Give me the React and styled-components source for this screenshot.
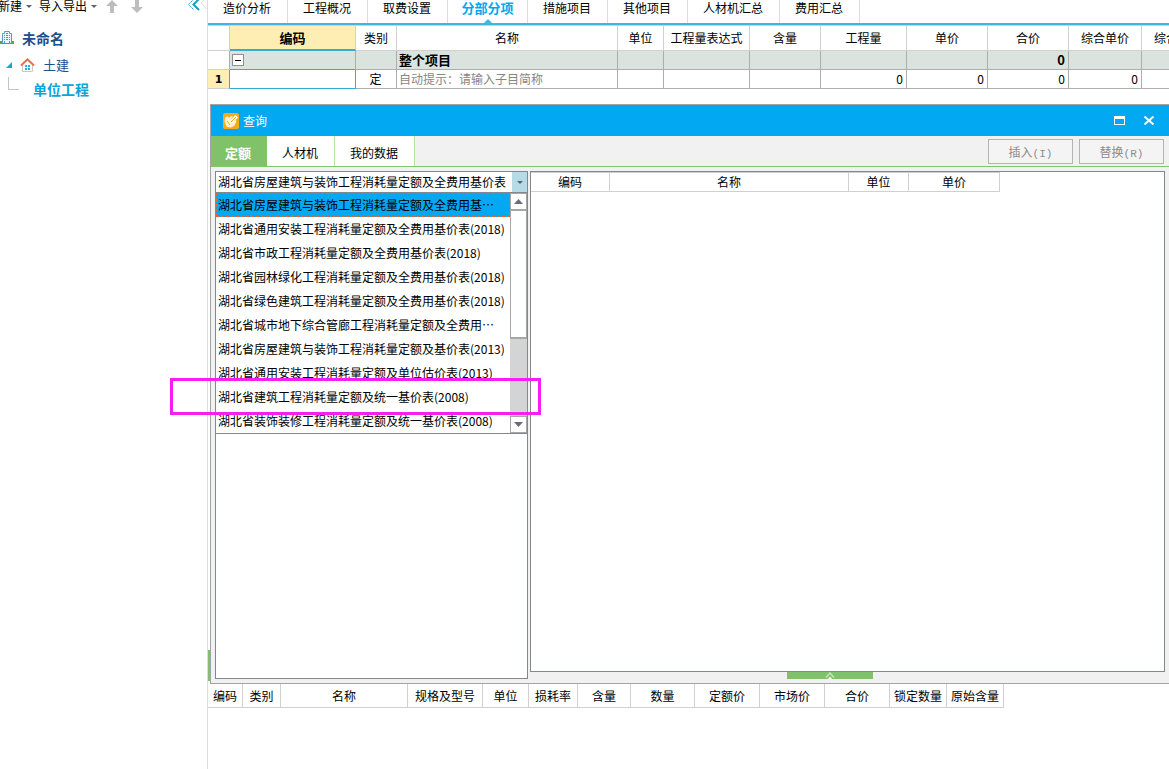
import { useState } from "react";
import styled, { createGlobalStyle } from "styled-components";

const GlobalStyle = createGlobalStyle`
  * {
    box-sizing: border-box;
  }
  body {
    margin: 0;
    background: #fff;
    color: #000;
    font-family: "Noto Sans CJK SC", sans-serif;
    font-size: 12px;
    line-height: 16px;
    overflow: hidden;
  }
  button, input, select {
    font: inherit;
    color: inherit;
    margin: 0;
    padding: 0;
    border: 0;
    border-radius: 0;
    background: none;
  }
`;

const Page = styled.div`
  display: flex;
  min-height: 100vh;
`;

/* sidebar */

const Sidebar = styled.aside`
  flex: 0 0 208px;
  border-right: 1px solid #dcdcdc;
`;

const Toolbar = styled.div`
  display: flex;
  align-items: center;
  height: 12px;
  margin-bottom: 12px;
  margin-left: -2px;
`;

const ToolButton = styled.button`
  display: flex;
  align-items: center;
  gap: 4px;
  margin-right: ${({ $gap }) => $gap || 8}px;
  white-space: nowrap;
`;

const CollapseButton = styled.button`
  display: flex;
  margin-left: auto;
`;

const TreeRow = styled.div`
  display: flex;
  align-items: center;
  gap: ${({ $gap }) => $gap || 8}px;
  height: ${({ $height }) => $height}px;
  padding-left: ${({ $indent }) => $indent || 0}px;
`;

const TreeLink = styled.a`
  color: ${({ $active }) => ($active ? "#0ba4dc" : "#1f4e8c")};
  font-size: ${({ $bold }) => ($bold ? 14 : 13)}px;
  font-weight: ${({ $bold }) => ($bold ? 700 : 400)};
  text-decoration: none;
`;

const Elbow = styled.span`
  width: 11px;
  height: 13px;
  margin-bottom: 12px;
  border-left: 1px solid #c4c4c4;
  border-bottom: 1px solid #c4c4c4;
`;

/* main area */

const Main = styled.main`
  display: flex;
  flex: 1;
  flex-direction: column;
  min-width: 0;
`;

const Tabs = styled.nav`
  display: flex;
  height: 25px;
  border-bottom: 2px solid #43b4e4;
`;

const Tab = styled.button`
  position: relative;
  min-width: 80px;
  padding: ${({ $active }) => ($active ? "0 8px 7px" : "0 16px 7px 15px")};
  border-right: 1px solid #dcdcdc;
  color: ${({ $active }) => ($active ? "#00a8f0" : "#000")};
  font-size: ${({ $active }) => ($active ? 13 : 12)}px;
  font-weight: ${({ $active }) => ($active ? 700 : 400)};
  white-space: nowrap;
`;

const TabPointer = styled.span`
  position: absolute;
  bottom: 0;
  left: 50%;
  margin-left: -4px;
  border: 4px solid transparent;
  border-top: 0;
  border-bottom-color: #43b4e4;
`;

const TableWrap = styled.div`
  overflow: hidden;
  min-height: ${({ $minHeight }) => $minHeight || 0}px;
`;

const Table = styled.table`
  width: 0;
  table-layout: fixed;
  border-collapse: separate;
  border-spacing: 0;
  border-top: ${({ $topLine }) => ($topLine ? "1px solid #d0d0d0" : "0")};
`;

const HeadCell = styled.th`
  height: ${({ $height }) => $height}px;
  padding: 0;
  border-right: 1px solid #d0d0d0;
  border-bottom: 1px solid #d0d0d0;
  background: #fff;
  font-weight: 400;
  white-space: nowrap;
  overflow: hidden;
`;

const ActiveHeadCell = styled(HeadCell)`
  border-bottom: 2px solid #3aa9d8;
  background: #ffeeb4;
  font-size: 13px;
  font-weight: 700;
`;

const Cell = styled.td`
  height: 19px;
  padding: 0 3px 0 2px;
  border-right: 1px solid #adadad;
  border-bottom: 1px solid ${({ $aboveEdit }) => ($aboveEdit ? "#3aa9d8" : "#adadad")};
  background: ${({ $total }) => ($total ? "#dae3de" : "#fff")};
  color: ${({ $muted }) => ($muted ? "#868686" : "#000")};
  font-size: ${({ $total }) => ($total ? 13 : 12)}px;
  font-weight: ${({ $total }) => ($total ? 700 : 400)};
  line-height: 16px;
  text-align: ${({ $align }) => $align || "left"};
  white-space: nowrap;
`;

const RowHead = styled.th`
  height: 19px;
  padding: 2px 0 0;
  border-right: 1px solid ${({ $active }) => ($active ? "#3aa9d8" : "#adadad")};
  border-bottom: 1px solid #d0d0d0;
  background: ${({ $active }) => ($active ? "#ffeeb4" : "#fff")};
  font-family: "DejaVu Sans", sans-serif;
  font-size: 11px;
  font-weight: 700;
`;

const EditCell = styled.td`
  padding: 0;
  border-right: 1px solid #3aa9d8;
  border-bottom: 1px solid #3aa9d8;
`;

const CodeInput = styled.input`
  display: block;
  width: 100%;
  height: 16px;
  padding: 0 3px;
  outline: none;
`;

const Toggle = styled.button`
  display: flex;
  align-items: center;
  justify-content: center;
  width: 12px;
  height: 12px;
  border: 1px solid #8f8f8f;
  background: #fff;
`;

const Minus = styled.span`
  width: 6px;
  height: 1px;
  background: #000;
`;

/* query window */

const Stage = styled.div`
  display: flex;
  flex: 1;
  margin-top: 15px;
`;

const Rail = styled.div`
  display: flex;
  flex: 0 0 2px;
  flex-direction: column;
  justify-content: flex-end;
  padding-bottom: 3px;
`;

const RailMark = styled.span`
  height: 31px;
  background: #80c26a;
`;

const Window = styled.section`
  display: flex;
  flex: 1;
  flex-direction: column;
  min-width: 0;
  border: 1px solid #a3a3a3;
  border-right: 0;
  background: #f1f1f1;
`;

const TitleBar = styled.header`
  display: flex;
  align-items: center;
  gap: 4px;
  height: 31px;
  padding: 0 14px 0 12px;
  background: #02a8f1;
  color: #fff;
`;

const WindowTitle = styled.h1`
  flex: 1;
  margin: 0;
  font-size: 12px;
  font-weight: 400;
`;

const WindowButton = styled.button`
  display: flex;
  margin-left: 14px;
`;

const WindowTabs = styled.div`
  display: flex;
  align-items: center;
  height: 31px;
  padding-right: 5px;
  border-bottom: 1px solid #7fc86b;
`;

const WindowTab = styled.button`
  height: 30px;
  padding: ${({ $active }) => ($active ? "4px 15px 0 14px" : "4px 16px 0 15px")};
  border-right: 1px solid ${({ $active }) => ($active ? "#80c26a" : "#b6e3a4")};
  background: ${({ $active }) => ($active ? "#80c26a" : "#fff")};
  color: ${({ $active }) => ($active ? "#fff" : "#000")};
  font-size: ${({ $active }) => ($active ? 13 : 12)}px;
  font-weight: ${({ $active }) => ($active ? 700 : 400)};
`;

const Actions = styled.div`
  display: flex;
  gap: 6px;
  margin-left: auto;
`;

const ActionButton = styled.button`
  width: 85px;
  height: 25px;
  padding-top: 3px;
  border: 1px solid #b3b3b3;
  background: #f4f4f4;
  color: #8c8c8c;
`;

const AccessKey = styled.span`
  font-family: "Liberation Mono", monospace;
  font-size: 11px;
`;

const WindowBody = styled.div`
  display: flex;
  flex: 1;
  gap: 2px;
  padding: 4px;
`;

const LeftPanel = styled.div`
  flex: 0 0 313px;
  border: 1px solid #828790;
  background: #fff;
`;

const Combo = styled.div`
  display: flex;
  height: 21px;
  border-bottom: 1px solid #828790;
`;

const ComboSelect = styled.select`
  flex: 1;
  min-width: 0;
  padding-left: 2px;
  appearance: none;
  outline: none;
`;

const ComboArrow = styled.span`
  display: flex;
  align-items: center;
  justify-content: center;
  width: 15px;
  background: #b5dbe6;
`;

const DropDown = styled.div`
  display: flex;
  border-bottom: 1px solid #828790;
`;

const Options = styled.ul`
  flex: 1;
  margin: 0;
  padding: 0;
  list-style: none;
`;

const Option = styled.li`
  position: relative;
  height: 24px;
  padding-left: 1px;
  border: 1px ${({ $selected }) => ($selected ? "dashed #f0641e" : "solid transparent")};
  background: ${({ $selected }) => ($selected ? "#02a8f1" : "#fff")};
  line-height: 22px;
  white-space: nowrap;
  cursor: default;
`;

const Marker = styled.span`
  position: absolute;
  z-index: 2;
  top: -8px;
  left: -47px;
  width: 371px;
  height: 37px;
  border: 3px solid #f41ff0;
  pointer-events: none;
`;

const ScrollBar = styled.div`
  display: flex;
  flex: 0 0 17px;
  flex-direction: column;
  background: #d4d4d4;
`;

const ScrollButton = styled.button`
  display: flex;
  align-items: center;
  justify-content: center;
  height: 17px;
  border: 1px solid #a6a6a6;
  background: #fff;
`;

const Thumb = styled.span`
  height: 129px;
  margin-bottom: auto;
  border: 1px solid #a6a6a6;
  border-bottom-width: 2px;
  background: #fff;
`;

const RightSide = styled.div`
  display: flex;
  flex: 1;
  flex-direction: column;
  min-width: 0;
`;

const ResultPanel = styled.div`
  flex: 1;
  border: 1px solid #828790;
  background: #fff;
`;

const HandleRow = styled.div`
  display: flex;
  justify-content: center;
  padding-right: 36px;
`;

const Handle = styled.button`
  display: flex;
  align-items: flex-end;
  justify-content: center;
  width: 86px;
  height: 7px;
  background: #80c26a;
`;

const CaretDown = () => (
  <svg width="6" height="3" viewBox="0 0 6 3" aria-hidden="true">
    <path d="M0 0h6L3 3z" fill="#5d6273" />
  </svg>
);

const BlockArrow = ({ down }) => (
  <svg width="12" height="13" viewBox="0 0 12 13" aria-hidden="true">
    <path
      d={down ? "M4 0h4v7h4l-6 6-6-6h4z" : "M4 13h4V6h4L6 0 0 6h4z"}
      fill="#bdbdbd"
    />
  </svg>
);

const CollapseIcon = () => (
  <svg width="20" height="16" viewBox="0 0 20 16" fill="none" aria-hidden="true">
    <path d="M7 1L1.500 6.500 7 12" stroke="#159fc4" strokeDasharray="2 1" />
    <path d="M12 1L6.500 6.500 12 12" stroke="#159fc4" strokeWidth="2" />
    <path d="M18 1l-3.500 4L19.500 11" stroke="#dcdcdc" />
  </svg>
);

const BuildingIcon = () => (
  <svg width="14" height="14" viewBox="0 0 14 14" aria-hidden="true">
    <path d="M2.500 2.500h2v-2h5v2h2v10h-9z" fill="#e7f6fc" stroke="#5a9cc0" />
    <path
      d="M4 4h1v1H4zM6 4h2v1H6zM9 4h1v1H9zM4 6h1v1H4zM6 6h2v1H6zM9 6h1v1H9zM4 8h1v1H4zM6 8h2v1H6zM9 8h1v1H9zM4 10h1v2H4zM9 10h1v2H9zM6 2h2v1H6z"
      fill="#2ba7de"
    />
    <path d="M0 10h2v3H0zM12 10h2v3h-2zM2 12h10v1H2z" fill="#4fae36" />
  </svg>
);

const HouseIcon = () => (
  <svg width="15" height="14" viewBox="0 0 15 14" aria-hidden="true">
    <path d="M2.500 6.500l5-4.500 5 4.500v7h-10z" fill="#fff" stroke="#c9c9c9" />
    <path d="M1 7.500L7.500 1.300 14 7.500" fill="none" stroke="#ed6f4e" strokeWidth="2" />
    <path d="M5 7h2v2H5zM8 7h2v2H8zM5 10h2v2H5zM8 10h2v2H8z" fill="#27a9e1" />
  </svg>
);

const ExpandedIcon = () => (
  <svg width="6" height="6" viewBox="0 0 6 6" aria-hidden="true">
    <path d="M6 0v6H0z" fill="#13a6e4" />
  </svg>
);

const QueryIcon = () => (
  <svg width="16" height="16" viewBox="0 0 16 16" aria-hidden="true">
    <rect width="16" height="16" rx="2" fill="#f9a91a" />
    <path
      d="M2 5q1-2 3-1.500l1 1.500 2-2 2 .5-3 4v2l2 .5 3.500-3 1 1-2 4.500-3.500 2-4-.5L2.500 11l-1-3z"
      fill="#fff3cf"
    />
    <path d="M7 7.500L12.500 2 15 4.500 9.500 10 6.500 10.500z" fill="#fff" />
    <path d="M8 9l5-5M4 8l3 4" stroke="#f5a623" fill="none" />
  </svg>
);

const MaximizeIcon = () => (
  <svg width="11" height="9" viewBox="0 0 11 9" aria-hidden="true">
    <path d="M0 0h11v9H0zM1 3v5h9V3z" fill="#fff" fillRule="evenodd" />
  </svg>
);

const CloseIcon = () => (
  <svg width="12" height="9" viewBox="0 0 12 9" aria-hidden="true">
    <path d="M1.500 .5l9 8M10.500 .5l-9 8" stroke="#fff" strokeWidth="2" />
  </svg>
);

const HandleIcon = () => (
  <svg width="10" height="7" viewBox="0 0 10 7" fill="none" aria-hidden="true">
    <path d="M1 5.500L5 1l4 4.500" stroke="#c4e5b9" strokeWidth="1.500" />
    <path d="M3 7l2-2.500L7 7z" fill="#fff" />
  </svg>
);

const tabs = [
  "造价分析",
  "工程概况",
  "取费设置",
  "分部分项",
  "措施项目",
  "其他项目",
  "人材机汇总",
  "费用汇总",
];

const projectColumns = [
  ["编码", 126],
  ["类别", 41],
  ["名称", 221],
  ["单位", 46],
  ["工程量表达式", 86],
  ["含量", 71],
  ["工程量", 86],
  ["单价", 81],
  ["合价", 81],
  ["综合单价", 73],
  ["综合合价", 73],
];

const resultColumns = [
  ["编码", 79],
  ["名称", 239],
  ["单位", 60],
  ["单价", 91],
];

const detailColumns = [
  ["编码", 35],
  ["类别", 38],
  ["名称", 127],
  ["规格及型号", 75],
  ["单位", 46],
  ["损耗率", 49],
  ["含量", 53],
  ["数量", 64],
  ["定额价", 65],
  ["市场价", 65],
  ["合价", 65],
  ["锁定数量", 57],
  ["原始含量", 57],
];

const libraries = [
  "湖北省房屋建筑与装饰工程消耗量定额及全费用基…",
  "湖北省通用安装工程消耗量定额及全费用基价表(2018)",
  "湖北省市政工程消耗量定额及全费用基价表(2018)",
  "湖北省园林绿化工程消耗量定额及全费用基价表(2018)",
  "湖北省绿色建筑工程消耗量定额及全费用基价表(2018)",
  "湖北省城市地下综合管廊工程消耗量定额及全费用…",
  "湖北省房屋建筑与装饰工程消耗量定额及基价表(2013)",
  "湖北省通用安装工程消耗量定额及单位估价表(2013)",
  "湖北省建筑工程消耗量定额及统一基价表(2008)",
  "湖北省装饰装修工程消耗量定额及统一基价表(2008)",
];

const Columns = ({ columns }) => (
  <>
    {columns.map(([name, width]) => (
      <col key={name} width={width} />
    ))}
  </>
);

const HeaderTable = ({ columns, height, topLine }) => (
  <Table $topLine={topLine}>
    <colgroup>
      <Columns columns={columns} />
    </colgroup>
    <thead>
      <tr>
        {columns.map(([name]) => (
          <HeadCell key={name} $height={height}>
            {name}
          </HeadCell>
        ))}
      </tr>
    </thead>
  </Table>
);

const ProjectTable = () => (
  <Table $topLine>
    <colgroup>
      <col width="22" />
      <Columns columns={projectColumns} />
    </colgroup>
    <thead>
      <tr>
        <HeadCell $height={25} />
        <ActiveHeadCell $height={25}>编码</ActiveHeadCell>
        {projectColumns.slice(1).map(([name]) => (
          <HeadCell key={name} $height={25}>
            {name}
          </HeadCell>
        ))}
      </tr>
    </thead>
    <tbody>
      <tr>
        <RowHead />
        <Cell $total $aboveEdit>
          <Toggle aria-label="折叠">
            <Minus />
          </Toggle>
        </Cell>
        <Cell $total />
        <Cell $total>整个项目</Cell>
        <Cell $total />
        <Cell $total />
        <Cell $total />
        <Cell $total />
        <Cell $total />
        <Cell $total $align="right">
          0
        </Cell>
        <Cell $total />
        <Cell $total />
      </tr>
      <tr>
        <RowHead $active>1</RowHead>
        <EditCell>
          <CodeInput aria-label="编码" />
        </EditCell>
        <Cell $align="center">定</Cell>
        <Cell $muted>自动提示：请输入子目简称</Cell>
        <Cell />
        <Cell />
        <Cell />
        <Cell $align="right">0</Cell>
        <Cell $align="right">0</Cell>
        <Cell $align="right">0</Cell>
        <Cell $align="right">0</Cell>
        <Cell />
      </tr>
    </tbody>
  </Table>
);

const App = () => {
  const [activeTab, setActiveTab] = useState("分部分项");
  const [windowTab, setWindowTab] = useState("定额");
  const [selected, setSelected] = useState(0);

  return (
    <Page lang="zh-CN">
      <GlobalStyle />
      <Sidebar>
        <Toolbar>
          <ToolButton $gap={7}>
            新建
            <CaretDown />
          </ToolButton>
          <ToolButton $gap={9}>
            导入导出
            <CaretDown />
          </ToolButton>
          <ToolButton $gap={13} aria-label="上移">
            <BlockArrow />
          </ToolButton>
          <ToolButton aria-label="下移">
            <BlockArrow down />
          </ToolButton>
          <CollapseButton aria-label="收起">
            <CollapseIcon />
          </CollapseButton>
        </Toolbar>
        <TreeRow $height={28}>
          <BuildingIcon />
          <TreeLink href="#project" $bold>
            未命名
          </TreeLink>
        </TreeRow>
        <TreeRow $height={26} $indent={6}>
          <ExpandedIcon />
          <HouseIcon />
          <TreeLink href="#civil">土建</TreeLink>
        </TreeRow>
        <TreeRow $height={22} $indent={8} $gap={14}>
          <Elbow />
          <TreeLink href="#unit" $bold $active>
            单位工程
          </TreeLink>
        </TreeRow>
      </Sidebar>

      <Main>
        <Tabs>
          {tabs.map((tab) => (
            <Tab key={tab} $active={tab === activeTab} onClick={() => setActiveTab(tab)}>
              {tab}
              {tab === activeTab && <TabPointer />}
            </Tab>
          ))}
        </Tabs>
        <TableWrap>
          <ProjectTable />
        </TableWrap>

        <Stage>
          <Rail>
            <RailMark />
          </Rail>
          <Window>
            <TitleBar>
              <QueryIcon />
              <WindowTitle>查询</WindowTitle>
              <WindowButton aria-label="最大化">
                <MaximizeIcon />
              </WindowButton>
              <WindowButton aria-label="关闭">
                <CloseIcon />
              </WindowButton>
            </TitleBar>
            <WindowTabs>
              {["定额", "人材机", "我的数据"].map((tab) => (
                <WindowTab key={tab} $active={tab === windowTab} onClick={() => setWindowTab(tab)}>
                  {tab}
                </WindowTab>
              ))}
              <Actions>
                <ActionButton>
                  插入<AccessKey>(I)</AccessKey>
                </ActionButton>
                <ActionButton>
                  替换<AccessKey>(R)</AccessKey>
                </ActionButton>
              </Actions>
            </WindowTabs>
            <WindowBody>
              <LeftPanel>
                <Combo>
                  <ComboSelect aria-label="定额库">
                    <option>湖北省房屋建筑与装饰工程消耗量定额及全费用基价表</option>
                  </ComboSelect>
                  <ComboArrow>
                    <CaretDown />
                  </ComboArrow>
                </Combo>
                <DropDown>
                  <Options role="listbox" aria-label="定额库列表">
                    {libraries.map((name, index) => (
                      <Option
                        key={name}
                        role="option"
                        aria-selected={index === selected}
                        $selected={index === selected}
                        onClick={() => setSelected(index)}
                      >
                        {name}
                        {index === 8 && <Marker />}
                      </Option>
                    ))}
                  </Options>
                  <ScrollBar>
                    <ScrollButton aria-label="向上滚动">
                      <svg width="9" height="5" viewBox="0 0 9 5" aria-hidden="true">
                        <path d="M0 5h9L4.500 0z" fill="#6b6b7b" />
                      </svg>
                    </ScrollButton>
                    <Thumb />
                    <ScrollButton aria-label="向下滚动">
                      <svg width="9" height="5" viewBox="0 0 9 5" aria-hidden="true">
                        <path d="M0 0h9L4.500 5z" fill="#6b6b7b" />
                      </svg>
                    </ScrollButton>
                  </ScrollBar>
                </DropDown>
              </LeftPanel>
              <RightSide>
                <ResultPanel>
                  <HeaderTable columns={resultColumns} height={19} topLine />
                </ResultPanel>
                <HandleRow>
                  <Handle aria-label="展开">
                    <HandleIcon />
                  </Handle>
                </HandleRow>
              </RightSide>
            </WindowBody>
          </Window>
        </Stage>

        <TableWrap $minHeight={85}>
          <HeaderTable columns={detailColumns} height={24} />
        </TableWrap>
      </Main>
    </Page>
  );
};

export default App;
